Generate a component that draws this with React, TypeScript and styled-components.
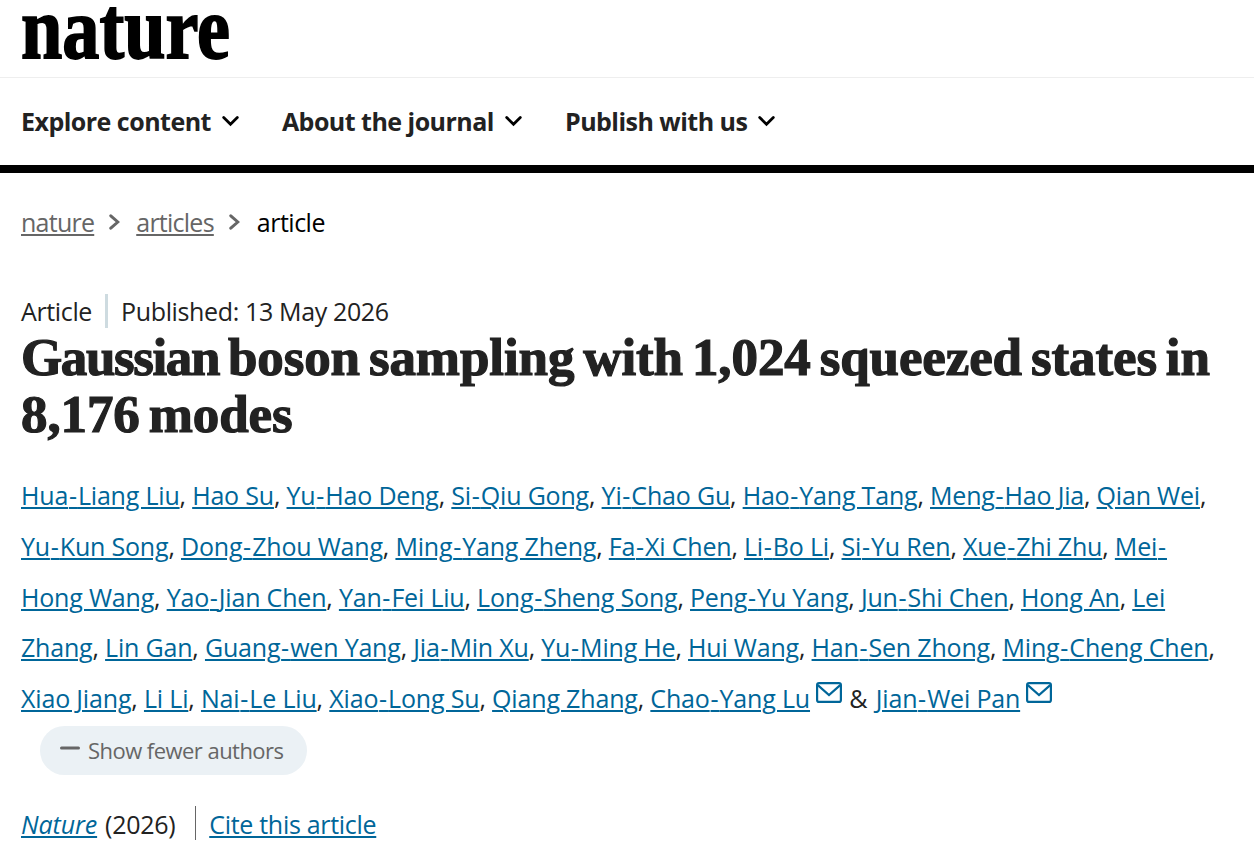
import React, { Fragment } from 'react';
import styled, { createGlobalStyle } from 'styled-components';

const GlobalStyle = createGlobalStyle`
  body {
    margin: 0;
    background: #fff;
    color: #222;
    font-family: 'Open Sans', 'Noto Sans', sans-serif;
    font-size: 25px;
    line-height: 34px;
    overflow: hidden;
  }
`;

const Header = styled.header`
  border-bottom: 8px solid #000;
`;
const LogoBar = styled.div`
  height: 77px;
  padding-left: 21px;
  border-bottom: 1px solid #eee;
`;
const Logo = styled.svg`
  display: block;
  overflow: visible;

  text {
    font-family: 'Liberation Serif', serif;
    font-weight: 700;
    font-size: 88px;
    stroke: #000;
    stroke-width: 1.8px;
  }
`;
const Nav = styled.nav`
  display: flex;
  align-items: center;
  gap: 43px;
  height: 87px;
  padding-left: 21px;
`;
const NavItem = styled.a`
  display: flex;
  align-items: center;
  gap: 11px;
  font-weight: 700;
  letter-spacing: -0.52px;
  line-height: 32px;
  white-space: nowrap;

  span {
    padding-bottom: 2px;
  }
`;

const Article = styled.main`
  padding: 32px 32px 0 21px;
`;
const Breadcrumbs = styled.nav`
  display: flex;
  align-items: center;
  gap: 16px;
  color: #000;
  letter-spacing: -0.75px;

  svg {
    margin-left: -1px;
  }
`;
const Link = styled.a<{ $color?: string }>`
  color: ${(p) => p.$color || '#069'};
  text-decoration: underline;
  text-decoration-thickness: 2px;
  text-underline-offset: 2px;
`;
const Current = styled.span`
  margin-left: 1px;
  letter-spacing: -0.5px;
`;
const Meta = styled.div`
  display: flex;
  margin-top: 55px;
  letter-spacing: -0.36px;
`;
const MetaDate = styled.span`
  margin-left: 13px;
  padding-left: 13px;
  border-left: 3px solid #cedbe0;
`;
const Title = styled.h1`
  margin: 0;
  padding-top: 1px;
  font-family: 'Liberation Serif', serif;
  font-weight: 700;
  font-size: 53px;
  line-height: 57px;
  letter-spacing: -0.1px;
  word-spacing: -4.2px;
  -webkit-text-stroke: 1.2px #222;

  span {
    letter-spacing: -1.4px;
  }
`;
const Authors = styled.p`
  margin: 27.4px 0 0;
  line-height: 50.67px;
  letter-spacing: -0.19px;
`;
const LastAuthors = styled.span`
  letter-spacing: -0.17px;
`;
const Ampersand = styled.span`
  margin-right: 2px;
`;
const Hyphen = styled.span`
  letter-spacing: 1px;
  padding-left: 0.8px;
`;
const Mail = styled.svg`
  margin: 0 1px 0 6px;
  vertical-align: 5px;
`;
const FewerButton = styled.button`
  display: flex;
  align-items: center;
  width: 267px;
  height: 49px;
  margin: 2.6px 0 0 19px;
  padding: 0 0 1px 20px;
  border: 0;
  border-radius: 25px;
  background: #ebf1f5;
  color: #666;
  font: inherit;
  font-size: 22px;
  letter-spacing: -0.54px;
  white-space: nowrap;

  svg {
    margin: -5px 8px 0 0;
  }
`;
const Citation = styled.div`
  display: flex;
  height: 34px;
  margin-top: 31px;
  line-height: 37px;
  letter-spacing: -0.3px;

  span {
    margin-left: 8px;
  }
`;
const Cite = styled.div`
  margin-left: 20px;
  padding-left: 13px;
  border-left: 1px solid #666;
`;
const Journal = styled.i`
  letter-spacing: -0.1px;
`;

const authors = [
  'Hua-Liang Liu', 'Hao Su', 'Yu-Hao Deng', 'Si-Qiu Gong', 'Yi-Chao Gu', 'Hao-Yang Tang',
  'Meng-Hao Jia', 'Qian Wei', 'Yu-Kun Song', 'Dong-Zhou Wang', 'Ming-Yang Zheng', 'Fa-Xi Chen',
  'Li-Bo Li', 'Si-Yu Ren', 'Xue-Zhi Zhu', 'Mei-Hong Wang', 'Yao-Jian Chen', 'Yan-Fei Liu',
  'Long-Sheng Song', 'Peng-Yu Yang', 'Jun-Shi Chen', 'Hong An', 'Lei Zhang', 'Lin Gan',
  'Guang-wen Yang', 'Jia-Min Xu', 'Yu-Ming He', 'Hui Wang', 'Han-Sen Zhong', 'Ming-Cheng Chen',
];
const lastAuthors = ['Xiao Jiang', 'Li Li', 'Nai-Le Liu', 'Xiao-Long Su', 'Qiang Zhang'];

const AuthorLink = ({ name }: { name: string }) => {
  const [first, ...rest] = name.split('-');
  return (
    <Link>
      {first}
      {rest.map((part) => (
        <Fragment key={part}>
          <Hyphen>-</Hyphen>
          {part}
        </Fragment>
      ))}
    </Link>
  );
};

const AuthorList = ({ names }: { names: string[] }) => (
  <>
    {names.map((name) => (
      <Fragment key={name}>
        <AuthorLink name={name} />,{' '}
      </Fragment>
    ))}
  </>
);

const MailIcon = () => (
  <Mail width="26" height="21" viewBox="0 0 26 21" fill="none" stroke="#069" strokeWidth="2.2">
    <rect x="1.1" y="1.1" width="23.8" height="18.8" rx="2" />
    <path d="M1.8 3.2L13 13L24.2 3.2" />
  </Mail>
);

const ChevronDown = () => (
  <svg width="17" height="12" viewBox="0 0 17 12" fill="none" stroke="#000" strokeWidth="2.8" strokeLinecap="round">
    <path d="M1.7 1.6L8.5 8.2L15.3 1.6" />
  </svg>
);

const ChevronRight = () => (
  <svg width="11" height="16" viewBox="0 0 11 16" fill="none" stroke="#666" strokeWidth="3" strokeLinecap="round">
    <path d="M1.8 1.8L8.8 8L1.8 14.2" />
  </svg>
);

const App = () => {
  return (
    <>
      <GlobalStyle />
      <Header>
        <LogoBar>
          <Logo width="210" height="77">
            <text x="0" y="57.7" textLength="209" lengthAdjust="spacingAndGlyphs">
              nature
            </text>
          </Logo>
        </LogoBar>
        <Nav>
          {['Explore content', 'About the journal', 'Publish with us'].map((label) => (
            <NavItem key={label}>
              <span>{label}</span>
              <ChevronDown />
            </NavItem>
          ))}
        </Nav>
      </Header>

      <Article>
        <Breadcrumbs>
          <Link $color="#666">nature</Link>
          <ChevronRight />
          <Link $color="#666">articles</Link>
          <ChevronRight />
          <Current>article</Current>
        </Breadcrumbs>

        <Meta>
          <span>Article</span>
          <MetaDate>Published: 13 May 2026</MetaDate>
        </Meta>
        <Title>
          <span>Gaussian</span> boson sampling with 1,024 squeezed states in 8,176 modes
        </Title>

        <Authors>
          <AuthorList names={authors} />
          <LastAuthors>
            <AuthorList names={lastAuthors} />
            <AuthorLink name="Chao-Yang Lu" />
            <MailIcon /> <Ampersand>&amp;</Ampersand> <AuthorLink name="Jian-Wei Pan" />
            <MailIcon />
          </LastAuthors>
        </Authors>
        <FewerButton>
          <svg width="20" height="4" viewBox="0 0 20 4">
            <rect width="20" height="3" y="0.5" rx="1.5" fill="#666" />
          </svg>
          Show fewer authors
        </FewerButton>

        <Citation>
          <Link>
            <Journal>Nature</Journal>
          </Link>
          <span>(2026)</span>
          <Cite>
            <Link>Cite this article</Link>
          </Cite>
        </Citation>
      </Article>
    </>
  );
};

export default App;
